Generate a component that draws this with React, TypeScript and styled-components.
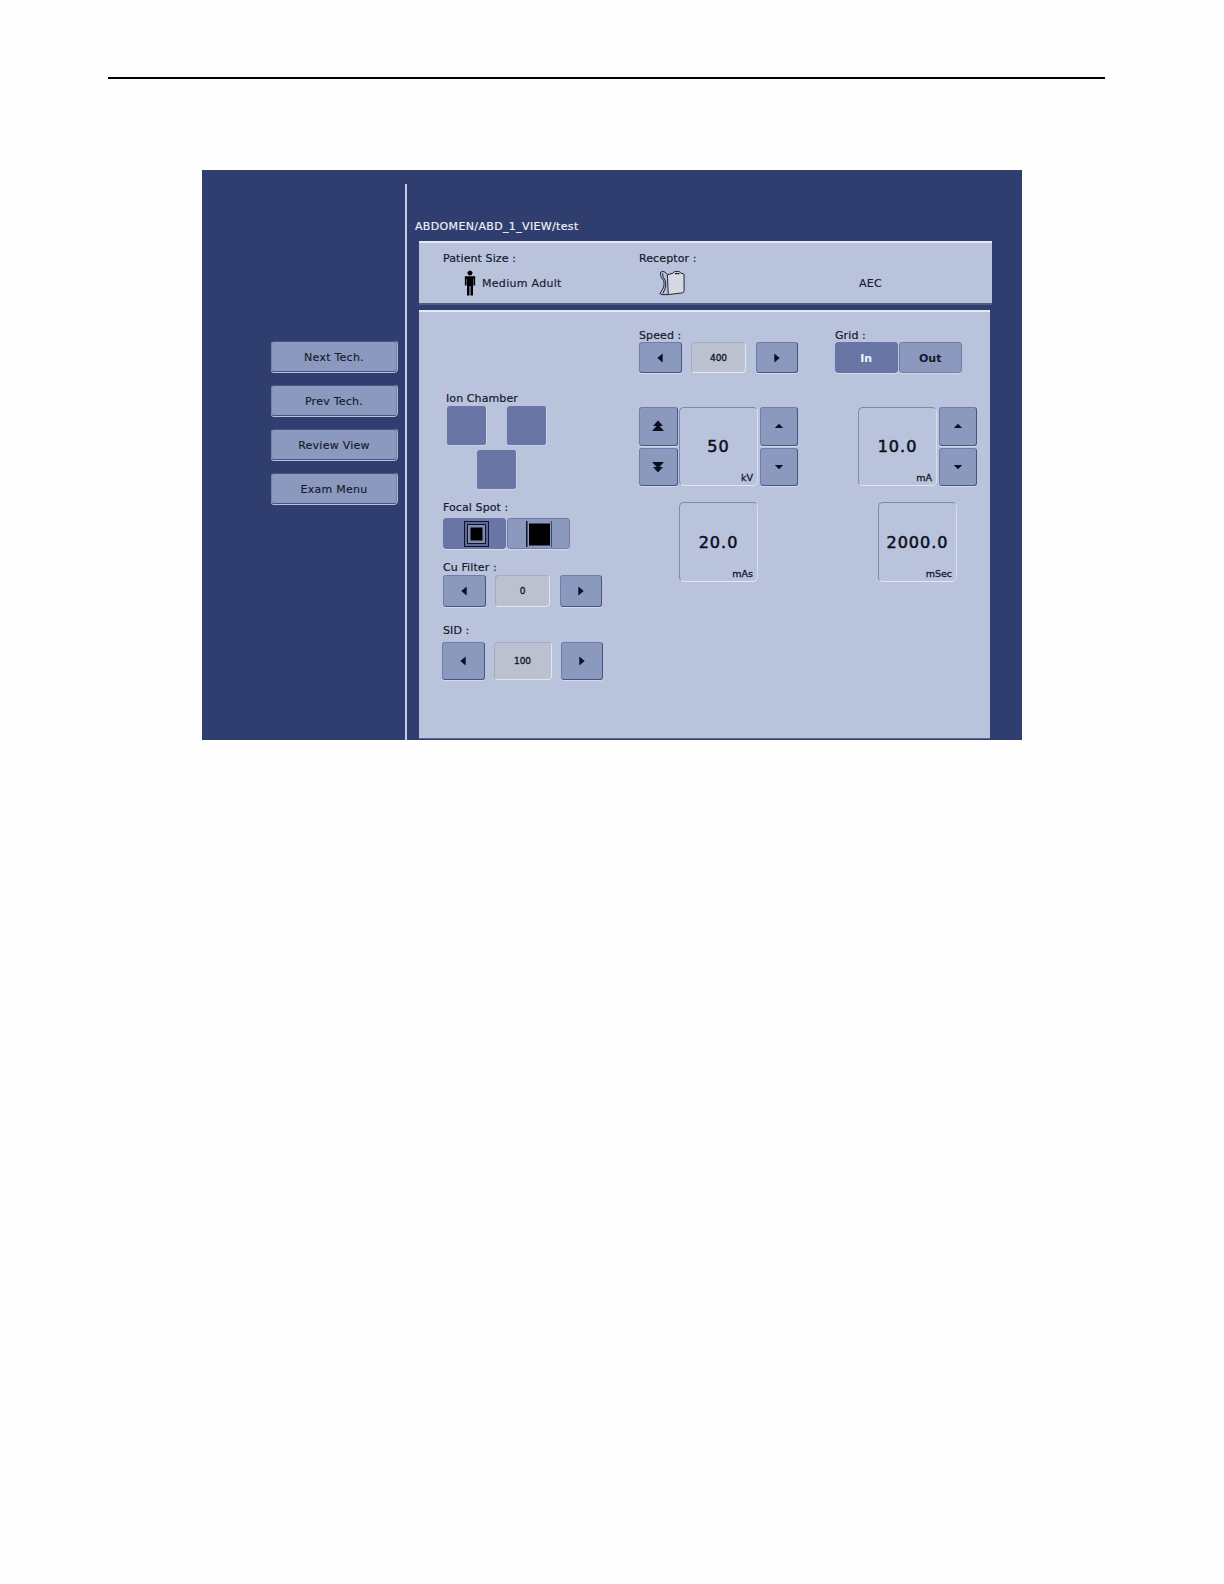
import styled, { createGlobalStyle } from "styled-components";

const GlobalStyle = createGlobalStyle`
  html, body {
    margin: 0;
    padding: 0;
    background: #fefefe;
    font-family: "DejaVu Sans", "Liberation Sans", sans-serif;
  }
`;

type ArrowDir = "left" | "right" | "up" | "down" | "fastUp" | "fastDown";

const arrowPaths: Record<ArrowDir, string> = {
  left: "M10.7 3.5 L10.7 12.5 L5.3 8 Z",
  right: "M5.3 3.5 L5.3 12.5 L10.7 8 Z",
  up: "M8 5.7 L12.2 10 L3.8 10 Z",
  down: "M3.8 6 L12.2 6 L8 10.3 Z",
  fastUp: "M8 2.5 L13 8 L3 8 Z M8 6.5 L14 13 L2 13 Z",
  fastDown: "M2 3 L14 3 L8 9.5 Z M3 8 L13 8 L8 13.5 Z",
};

const Arrow = ({ dir }: { dir: ArrowDir }) => (
  <svg width="16" height="16" viewBox="0 0 16 16">
    <path d={arrowPaths[dir]} fill="#0b1020" />
  </svg>
);

const PersonIcon = () => (
  <svg width="12" height="26" viewBox="0 0 14 27" preserveAspectRatio="none">
    <path d="M3.6 2.6 H10.4 V3.4 H3.6 Z" fill="#000" />
    <circle cx="7" cy="3" r="2.6" fill="#000" />
    <path d="M1 6.5 H13 V16 H11 V9 H10.5 V26.5 H7.6 V16.5 H6.4 V26.5 H3.5 V9 H3 V16 H1 Z" fill="#000" />
  </svg>
);

const ReceptorIcon = () => (
  <svg width="26" height="26" viewBox="0 0 28 27">
    <path
      d="M9 4.5 L15 3 L16.5 1.2 H22 L23.5 3 L26 3.4 Q27 3.6 27 5 V22 Q27 24 25 24.2 L10 26 Z"
      fill="#d6d9e0"
      stroke="#14182a"
      strokeWidth="1"
    />
    <path d="M17 2.8 H22 V4 H17 Z" fill="#14182a" />
    <path
      d="M9 4.5 Q7 1 4 1 Q1 1 1.5 4 Q2 8 5 11 Q6 13 5 18 Q3 22 1 25 L3 26 L10 26"
      fill="none"
      stroke="#14182a"
      strokeWidth="1"
    />
    <path d="M4 3 Q3.4 7 6.5 10.5 Q8 14 6.8 19 L4.2 24.8" fill="none" stroke="#14182a" strokeWidth="1" />
  </svg>
);

const LargeFocalIcon = () => (
  <svg width="30" height="26" viewBox="0 0 30 26">
    <rect x="5.5" y="0.5" width="24" height="25" fill="#5c6896" stroke="#10152a" strokeWidth="1" />
    <rect x="8.5" y="3.5" width="18" height="19" fill="#7f8bb5" stroke="#10152a" strokeWidth="1" />
    <rect x="11.5" y="6.5" width="12" height="13" fill="#000" />
  </svg>
);

const SmallFocalIcon = () => (
  <svg width="28" height="26" viewBox="0 0 28 26">
    <rect x="5" y="2.5" width="21" height="22" fill="#000" />
    <rect x="2" y="0" width="1.5" height="26" fill="#10152a" />
    <rect x="27" y="0" width="1" height="26" fill="#3a4670" />
  </svg>
);

const Page = styled.div`
  width: 1224px;
  height: 1584px;
  overflow: hidden;
  padding-top: 77px;
  box-sizing: border-box;
`;

const Rule = styled.div`
  width: 997px;
  height: 2px;
  margin-left: 108px;
  background: #000;
`;

const Screen = styled.div`
  width: 820px;
  height: 570px;
  margin: 91px 0 0 202px;
  background: #2f3e6e;
  display: flex;
`;

const Sidebar = styled.div`
  width: 203px;
  flex-shrink: 0;
  box-sizing: border-box;
  padding: 171px 8px 0 69px;
  display: flex;
  flex-direction: column;
  gap: 13px;
`;

const NavButton = styled.div`
  height: 31px;
  box-sizing: border-box;
  padding-top: 1px;
  display: flex;
  align-items: center;
  justify-content: center;
  font-size: 11px;
  letter-spacing: 0.25px;
  -webkit-text-stroke: 0.15px #14192e;
  color: #14192e;
  background: #8c99bf;
  border: 1px solid #7483ad;
  border-top-color: #46557f;
  border-bottom-color: #46557f;
  border-radius: 3px;
  box-shadow: 0 1px 0 #b8c2de, 1px 0 0 #a9b4d4;
`;

const Content = styled.div`
  flex: 1;
  margin-top: 14px;
  border-left: 2px solid #c3cce3;
  display: flex;
  flex-direction: column;
  padding-left: 12px;
`;

const Breadcrumb = styled.div`
  margin: 36px 0 0 -4px;
  height: 14px;
  line-height: 14px;
  font-size: 11px;
  letter-spacing: 0.35px;
  -webkit-text-stroke: 0.15px #f1f3fa;
  color: #f1f3fa;
`;

const HeaderPanel = styled.div`
  width: 573px;
  height: 64px;
  margin-top: 7px;
  box-sizing: border-box;
  background: #bac3dc;
  border-top: 2px solid #e2e7f4;
  border-bottom: 2px solid #4d5b85;
  display: grid;
  grid-template-columns: 196px 220px 1fr;
  padding: 9px 0 0 24px;
`;

const HeaderCol = styled.div`
  display: flex;
  flex-direction: column;
`;

const Label = styled.div`
  font-size: 11px;
  line-height: 13px;
  letter-spacing: 0.1px;
  -webkit-text-stroke: 0.2px #14192e;
  color: #14192e;
  white-space: nowrap;
`;

const IndentLabel = styled(Label)`
  margin-left: 3px;
`;

const HeaderValue = styled.div<{ $indent: number }>`
  display: flex;
  align-items: center;
  gap: 6px;
  height: 26px;
  margin: 5px 0 0 ${(p) => p.$indent}px;
  font-size: 11px;
  letter-spacing: 0.3px;
  -webkit-text-stroke: 0.15px #14192e;
  color: #14192e;
  white-space: nowrap;
`;

const MainPanel = styled.div`
  width: 571px;
  height: 429px;
  margin-top: 5px;
  box-sizing: border-box;
  background: #bac3dc;
  border-top: 2px solid #e2e7f4;
  border-bottom: 1px solid #5a688f;
  display: grid;
  grid-template-columns: 220px 196px 1fr;
`;

const LeftCol = styled.div`
  padding: 80px 0 0 24px;
  display: flex;
  flex-direction: column;
`;

const ValueCol = styled.div`
  padding-top: 17px;
  display: flex;
  flex-direction: column;
`;

const ChamberGrid = styled.div`
  width: 100px;
  margin: 1px 0 0 4px;
  display: grid;
  grid-template-columns: repeat(2, 40px);
  column-gap: 20px;
  row-gap: 4px;
`;

const Chamber = styled.div<{ $center?: boolean }>`
  width: 40px;
  height: 40px;
  box-sizing: border-box;
  background: #6875a5;
  border-radius: 3px;
  border-bottom: 1px solid #c9d1e8;
  border-right: 1px solid #c9d1e8;
  ${(p) => p.$center && "grid-column: 1 / span 2; justify-self: center;"}
`;

const SpotLabel = styled(Label)<{ $top: number }>`
  margin-top: ${(p) => p.$top}px;
`;

const ToggleRow = styled.div<{ $top: number }>`
  display: flex;
  gap: 1.5px;
  margin-top: ${(p) => p.$top}px;
`;

const Toggle = styled.div<{ $active?: boolean }>`
  width: 62.5px;
  height: 31px;
  box-sizing: border-box;
  padding-top: 2px;
  display: flex;
  align-items: center;
  justify-content: center;
  font-size: 11px;
  font-weight: bold;
  color: ${(p) => (p.$active ? "#f1f3fa" : "#14192e")};
  background: ${(p) => (p.$active ? "#6875a5" : "#8c99bf")};
  border: 1px solid ${(p) => (p.$active ? "#6875a5" : "#6f7da8")};
  border-radius: 3px;
  box-shadow: 0 1px 0 #d4daec;
`;

const IconToggle = styled(Toggle)`
  padding-top: 0;
`;

const Stepper = styled.div<{ $height: number; $top: number; $left?: number; $gap: number }>`
  height: ${(p) => p.$height}px;
  margin-top: ${(p) => p.$top}px;
  margin-left: ${(p) => p.$left ?? 0}px;
  display: flex;
  gap: ${(p) => p.$gap}px;
`;

const StepButton = styled.div`
  width: 42.5px;
  height: 100%;
  box-sizing: border-box;
  display: flex;
  align-items: center;
  justify-content: center;
  background: #8c99bf;
  border: 1px solid #6f7da8;
  border-bottom-color: #46557f;
  border-right-color: #46557f;
  border-radius: 3px;
  box-shadow: 0 1px 0 #d4daec;
`;

const StepValue = styled.div<{ $width: number }>`
  width: ${(p) => p.$width}px;
  box-sizing: border-box;
  display: flex;
  align-items: center;
  justify-content: center;
  font-size: 9px;
  -webkit-text-stroke: 0.35px #14192e;
  color: #14192e;
  background: #bcc1d0;
  border: 1px solid #a3abc4;
  border-right-color: #e2e6f2;
  border-bottom-color: #e2e6f2;
  border-radius: 4px;
`;

const Dial = styled.div<{ $left?: number }>`
  display: flex;
  gap: 1.5px;
  height: 79px;
  margin-top: 34px;
  margin-left: ${(p) => p.$left ?? 0}px;
`;

const DialStack = styled.div`
  width: 38.5px;
  display: flex;
  flex-direction: column;
  gap: 2px;
`;

const DialButton = styled(StepButton)`
  width: 100%;
  flex: 1;
  height: auto;
`;

const Readout = styled.div<{ $left?: number }>`
  position: relative;
  width: 79px;
  height: 80px;
  flex-shrink: 0;
  box-sizing: border-box;
  margin-left: ${(p) => p.$left ?? 0}px;
  display: flex;
  align-items: center;
  justify-content: center;
  font-size: 16px;
  letter-spacing: 1px;
  -webkit-text-stroke: 0.55px #0b0f20;
  color: #0b0f20;
  border: 1px solid #7d89ad;
  border-right-color: #d8deef;
  border-bottom-color: #e2e7f4;
  border-radius: 5px;
`;

const DialReadout = styled(Readout)`
  height: 79px;
`;

const LooseReadout = styled(Readout)`
  margin-top: 16px;
`;

const Unit = styled.span`
  position: absolute;
  right: 4px;
  bottom: 2px;
  font-size: 9.5px;
  letter-spacing: 0;
  -webkit-text-stroke: 0.3px #14192e;
  color: #14192e;
`;

const navItems = ["Next Tech.", "Prev Tech.", "Review View", "Exam Menu"];

export default function App() {
  return (
    <Page>
      <GlobalStyle />
      <Rule />
      <Screen>
        <Sidebar>
          {navItems.map((item) => (
            <NavButton key={item}>{item}</NavButton>
          ))}
        </Sidebar>
        <Content>
          <Breadcrumb>ABDOMEN/ABD_1_VIEW/test</Breadcrumb>
          <HeaderPanel>
            <HeaderCol>
              <Label>Patient Size :</Label>
              <HeaderValue $indent={21}>
                <PersonIcon />
                Medium Adult
              </HeaderValue>
            </HeaderCol>
            <HeaderCol>
              <Label>Receptor :</Label>
              <HeaderValue $indent={20}>
                <ReceptorIcon />
              </HeaderValue>
            </HeaderCol>
            <HeaderCol>
              <Label>&nbsp;</Label>
              <HeaderValue $indent={0}>AEC</HeaderValue>
            </HeaderCol>
          </HeaderPanel>
          <MainPanel>
            <LeftCol>
              <IndentLabel>Ion Chamber</IndentLabel>
              <ChamberGrid>
                <Chamber />
                <Chamber />
                <Chamber $center />
              </ChamberGrid>
              <SpotLabel $top={11}>Focal Spot :</SpotLabel>
              <ToggleRow $top={4}>
                <IconToggle $active>
                  <LargeFocalIcon />
                </IconToggle>
                <IconToggle>
                  <SmallFocalIcon />
                </IconToggle>
              </ToggleRow>
              <SpotLabel $top={12}>Cu Filter :</SpotLabel>
              <Stepper $height={32} $top={1} $gap={9.5}>
                <StepButton>
                  <Arrow dir="left" />
                </StepButton>
                <StepValue $width={55}>0</StepValue>
                <StepButton>
                  <Arrow dir="right" />
                </StepButton>
              </Stepper>
              <SpotLabel $top={17}>SID :</SpotLabel>
              <Stepper $height={38} $top={5} $left={-1} $gap={9}>
                <StepButton>
                  <Arrow dir="left" />
                </StepButton>
                <StepValue $width={58}>100</StepValue>
                <StepButton>
                  <Arrow dir="right" />
                </StepButton>
              </Stepper>
            </LeftCol>
            <ValueCol>
              <Label>Speed :</Label>
              <Stepper $height={31} $top={0} $gap={9.5}>
                <StepButton>
                  <Arrow dir="left" />
                </StepButton>
                <StepValue $width={55}>400</StepValue>
                <StepButton>
                  <Arrow dir="right" />
                </StepButton>
              </Stepper>
              <Dial>
                <DialStack>
                  <DialButton>
                    <Arrow dir="fastUp" />
                  </DialButton>
                  <DialButton>
                    <Arrow dir="fastDown" />
                  </DialButton>
                </DialStack>
                <DialReadout>
                  50
                  <Unit>kV</Unit>
                </DialReadout>
                <DialStack>
                  <DialButton>
                    <Arrow dir="up" />
                  </DialButton>
                  <DialButton>
                    <Arrow dir="down" />
                  </DialButton>
                </DialStack>
              </Dial>
              <LooseReadout $left={40}>
                20.0
                <Unit>mAs</Unit>
              </LooseReadout>
            </ValueCol>
            <ValueCol>
              <Label>Grid :</Label>
              <ToggleRow $top={0}>
                <Toggle $active>In</Toggle>
                <Toggle>Out</Toggle>
              </ToggleRow>
              <Dial $left={23}>
                <DialReadout>
                  10.0
                  <Unit>mA</Unit>
                </DialReadout>
                <DialStack>
                  <DialButton>
                    <Arrow dir="up" />
                  </DialButton>
                  <DialButton>
                    <Arrow dir="down" />
                  </DialButton>
                </DialStack>
              </Dial>
              <LooseReadout $left={43}>
                2000.0
                <Unit>mSec</Unit>
              </LooseReadout>
            </ValueCol>
          </MainPanel>
        </Content>
      </Screen>
    </Page>
  );
}
